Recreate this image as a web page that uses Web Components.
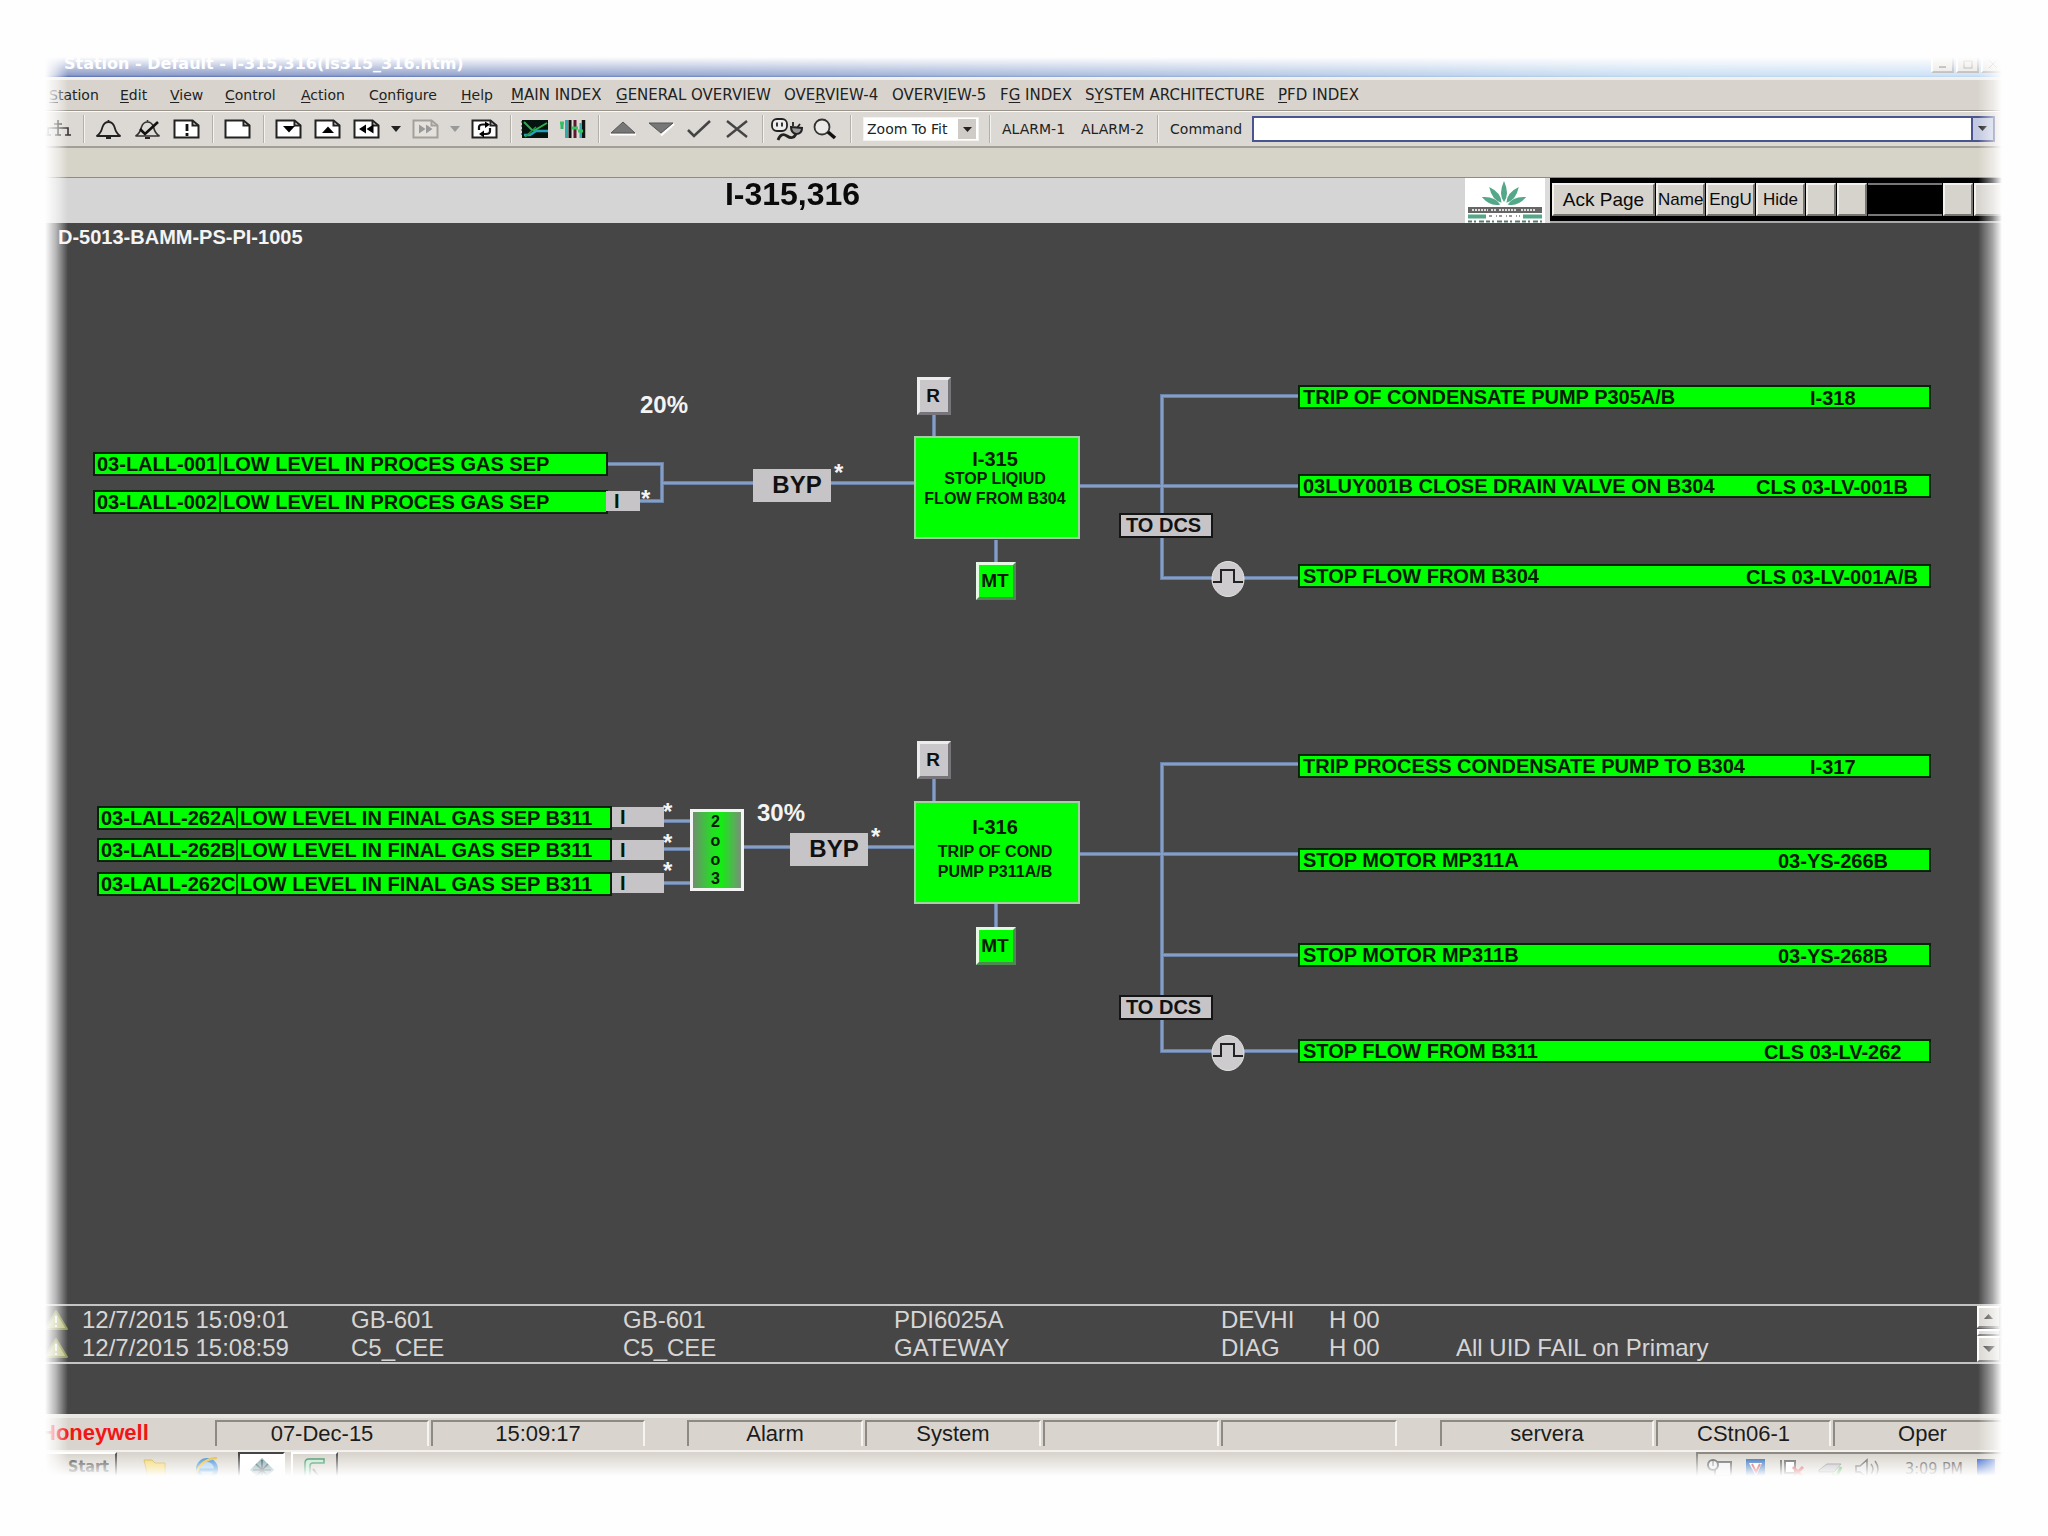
<!DOCTYPE html>
<html lang="en">
<head>
<meta charset="utf-8">
<title>Station - Default - I-315,316</title>
<style>
  html, body { margin: 0; background: #fefefe; }
  body { font-family: "Liberation Sans", Arial, sans-serif; color: #111; }
</style>
</head>
<body>
<station-window>
  <title-bar>Station - Default - I-315,316(Is315_316.htm)</title-bar>
  <menu-bar></menu-bar>
  <tool-bar></tool-bar>
  <page-header>I-315,316</page-header>
  <logic-canvas>
    <free-label x="58" y="0" size="20">D-5013-BAMM-PS-PI-1005</free-label>

    <free-label x="640" y="168" size="24">20%</free-label>
    <trip-input x="93" y="229" w="515" code-width="126" code="03-LALL-001">LOW LEVEL IN PROCES GAS SEP</trip-input>
    <trip-input x="93" y="267" w="515" code-width="126" code="03-LALL-002">LOW LEVEL IN PROCES GAS SEP</trip-input>
    <inhibit-tag x="606" y="268" w="34">I</inhibit-tag>
    <free-label x="641" y="264" size="24" star>*</free-label>
    <bypass-key x="753" y="246">BYP</bypass-key>
    <free-label x="834" y="238" size="24" star>*</free-label>
    <square-key x="917" y="154" w="34">R</square-key>
    <trip-block x="914" y="213" name="I-315"><span>STOP LIQIUD</span><span>FLOW FROM B304</span></trip-block>
    <square-key x="976" y="339" w="40" lit>MT</square-key>
    <dcs-tag x="1119" y="290">TO DCS</dcs-tag>
    <pulse-node x="1211" y="338"></pulse-node>
    <trip-output x="1298" y="162" ref="I-318" indent="510">TRIP OF CONDENSATE PUMP P305A/B</trip-output>
    <trip-output x="1298" y="251" ref="CLS 03-LV-001B" indent="456">03LUY001B CLOSE DRAIN VALVE ON B304</trip-output>
    <trip-output x="1298" y="341" ref="CLS 03-LV-001A/B" indent="446">STOP FLOW FROM B304</trip-output>

    <trip-input x="97" y="583" w="515" code-width="139" code="03-LALL-262A">LOW LEVEL IN FINAL GAS SEP B311</trip-input>
    <trip-input x="97" y="615" w="515" code-width="139" code="03-LALL-262B">LOW LEVEL IN FINAL GAS SEP B311</trip-input>
    <trip-input x="97" y="649" w="515" code-width="139" code="03-LALL-262C">LOW LEVEL IN FINAL GAS SEP B311</trip-input>
    <inhibit-tag x="612" y="584" w="52">I</inhibit-tag>
    <inhibit-tag x="612" y="617" w="52">I</inhibit-tag>
    <inhibit-tag x="612" y="650" w="52">I</inhibit-tag>
    <free-label x="663" y="577" size="24" star>*</free-label>
    <free-label x="663" y="608" size="24" star>*</free-label>
    <free-label x="663" y="636" size="24" star>*</free-label>
    <vote-block x="690" y="586"><span>2</span><span>o</span><span>o</span><span>3</span></vote-block>
    <free-label x="757" y="576" size="24">30%</free-label>
    <bypass-key x="790" y="610">BYP</bypass-key>
    <free-label x="871" y="602" size="24" star>*</free-label>
    <square-key x="917" y="518" w="34">R</square-key>
    <trip-block x="914" y="578" name="I-316" spaced><span>TRIP OF COND</span><span>PUMP P311A/B</span></trip-block>
    <square-key x="976" y="704" w="40" lit>MT</square-key>
    <dcs-tag x="1119" y="772">TO DCS</dcs-tag>
    <pulse-node x="1211" y="812"></pulse-node>
    <trip-output x="1298" y="531" ref="I-317" indent="510">TRIP PROCESS CONDENSATE PUMP TO B304</trip-output>
    <trip-output x="1298" y="625" ref="03-YS-266B" indent="478">STOP MOTOR MP311A</trip-output>
    <trip-output x="1298" y="720" ref="03-YS-268B" indent="478">STOP MOTOR MP311B</trip-output>
    <trip-output x="1298" y="816" ref="CLS 03-LV-262" indent="464">STOP FLOW FROM B311</trip-output>
  </logic-canvas>
  <alarm-banner></alarm-banner>
  <status-bar></status-bar>
  <task-bar></task-bar>
</station-window>

<script>
const RESET = `
  :host, *, *::before, *::after { box-sizing: border-box; }
  button, input, select { font: inherit; color: inherit; margin: 0; padding: 0; border: 0; background: none; border-radius: 0; }
  svg { display: block; }
`;

function define(name, css, html) {
  customElements.define(name, class extends HTMLElement {
    connectedCallback() {
      if (this.shadowRoot) return;
      const root = this.attachShadow({ mode: 'open' });
      root.innerHTML = `<style>${RESET}${css}</style>${html}`;
    }
  });
}

/* Nodes of the free canvas: x, y and w come from attributes. */
function defineNode(name, css, html) {
  customElements.define(name, class extends HTMLElement {
    connectedCallback() {
      if (this.shadowRoot) return;
      const root = this.attachShadow({ mode: 'open' });
      const at = k => this.getAttribute(k);
      const place = `:host { position: absolute; left: ${at('x')}px; top: ${at('y')}px; ${at('w') ? `width: ${at('w')}px;` : ''} font-weight: bold; font-size: 20px; line-height: 20px; white-space: nowrap; color: #031a03; }`;
      root.innerHTML = `<style>${RESET}${place}${css}</style>${typeof html === 'function' ? html(at) : html}`;
    }
  });
}

define('station-window', `
  :host {
    display: flex; flex-direction: column; padding-top: 50px;
    -webkit-mask-image: linear-gradient(to right, transparent 45px, rgba(0,0,0,.4) 56px, #000 68px, #000 calc(100% - 70px), rgba(0,0,0,.5) calc(100% - 56px), transparent calc(100% - 46px)),
      linear-gradient(to bottom, transparent 57px, rgba(0,0,0,.5) 75px, #000 79px, #000 calc(100% - 30px), transparent calc(100% - 8px));
    mask-image: linear-gradient(to right, transparent 45px, rgba(0,0,0,.4) 56px, #000 68px, #000 calc(100% - 70px), rgba(0,0,0,.5) calc(100% - 56px), transparent calc(100% - 46px)),
      linear-gradient(to bottom, transparent 57px, rgba(0,0,0,.5) 75px, #000 79px, #000 calc(100% - 30px), transparent calc(100% - 8px));
    -webkit-mask-composite: source-in; mask-composite: intersect;
  }`, `<slot></slot>`);

define('title-bar', `
  :host { display: flex; justify-content: space-between; align-items: center; height: 27px; padding: 0 0 0 64px;
    background: linear-gradient(to right, #1c3a94, #3d5ca8 35%, #9dc4ea 80%, #a6caf0); color: #fff;
    font: bold 16px/20px "DejaVu Sans", sans-serif; }
  div { display: flex; gap: 2px; padding-right: 44px; }
  button { width: 23px; height: 18px; background: #d8d4cc; border: 2px solid; border-color: #fff #777 #777 #fff; display: grid; place-items: center; }`,
  `<span><slot></slot></span>
   <div>
    <button aria-label="Minimize"><svg width="12" height="10"><path d="M2 8h7" stroke="#333" stroke-width="2"/></svg></button>
    <button aria-label="Restore"><svg width="12" height="10"><rect x="2" y="2" width="8" height="7" fill="none" stroke="#333"/></svg></button>
    <button aria-label="Close"><svg width="12" height="10"><path d="M2 1l8 8M10 1l-8 8" stroke="#333"/></svg></button>
   </div>`);

const MENUS = ['_Station','_Edit','_View','_Control','_Action','C_onfigure','_Help'];
const PAGES = ['_MAIN INDEX','_GENERAL OVERVIEW','OVE_RVIEW-4','OVERV_IEW-5','F_G INDEX','S_YSTEM ARCHITECTURE','_PFD INDEX'];
const menuItem = cls => m => `<button class="${cls}">${m.replace(/_(.)/, '<u>$1</u>')}</button>`;
define('menu-bar', `
  :host { display: block; background: #d8d4cd; border-top: 3px solid #f1efec; border-bottom: 1px solid #99958d;
    font: 14px/20px "DejaVu Sans", sans-serif; color: #222; }
  nav { display: grid; grid-template-columns: 71px 50px 55px 76px 68px 92px 50px 105px 168px 108px 108px 85px 193px auto; justify-content: start; align-items: center; height: 30px; padding-left: 49px; }
  button { text-align: left; white-space: nowrap; }
  .page { font-size: 15px; }
  u { text-underline-offset: 2px; }`,
  `<nav>${MENUS.map(menuItem('menu')).join('')}${PAGES.map(menuItem('page')).join('')}</nav>`);

const page = (inner, c = '#222', f = '#fff') => `<path d="M1.5 1.5h18l6 5v12h-24z" fill="${f}" stroke="${c}" stroke-width="2"/><path d="M19.5 1.5v5h6" fill="none" stroke="${c}" stroke-width="2"/>${inner}`;
const ICONS = {
  'Tree': `<g fill="none" stroke="#333" stroke-width="1.6"><path d="M14 1v8M4 16V9h20v7M14 9v7M10 5h8"/><path d="M1 16h6M11 16h6M21 16h6"/></g>`,
  'Alarms': `<path d="M13.500 1v2M1.500 17c4-2 5-5 6-9 1-3 3-5 6-5s5 2 6 5c1 4 2 7 6 9z" fill="#dedbd6" stroke="#222" stroke-width="1.800"/><path d="M11 19h5" stroke="#222" stroke-width="2"/>`,
  'Acknowledge': `<path d="M13.500 1v2M1.500 17c4-2 5-5 6-9 1-3 3-5 6-5s5 2 6 5c1 4 2 7 6 9z" fill="#dedbd6" stroke="#333" stroke-width="1.600"/><path d="M6 10l5 5L24 3" fill="none" stroke="#111" stroke-width="2.600"/><path d="M11 19h5" stroke="#222" stroke-width="2"/>`,
  'Messages': page('<path d="M14 5v7M14 14v3" stroke="#111" stroke-width="2.800"/>'),
  'Page': page(''),
  'Page down': page('<path d="M8 7h12l-6 6.500z"/>'),
  'Page up': page('<path d="M8 14h12l-6-6.500z"/>'),
  'Back': page('<path d="M13 5.500v9l-7-4.500zM20.500 5.500v9l-7-4.500z"/>'),
  'Forward': page('<path d="M7 5.500v9l6.500-4.500zM14 5.500v9l6.500-4.500z" fill="#999"/>', '#a3a09b', '#e4e1dd'),
  'Reload': page('<path d="M8 11V8q0-2.500 4-2.500h3M19 9v3q0 3-4 3h-3" fill="none" stroke="#111" stroke-width="2.200"/><path d="M14 2.500l5 3-5 3.500zM13 11.500L8 15l5 3.500z"/>'),
  'Trend': `<rect x="1" y="1" width="26" height="18" fill="#061410"/><path d="M1 3h-1M1 7h-1M1 11h-1M1 15h-1" stroke="#222"/><path d="M3 3l8 8h3L26 4" fill="none" stroke="#2fae4c" stroke-width="2"/><path d="M3 16h6l6-4h12" fill="none" stroke="#26a2b8" stroke-width="2.500"/><path d="M4 18L15 8" stroke="#1f9a32" stroke-width="1.500"/>`,
  'Group': `<path d="M3 4v6" stroke="#2fb86a" stroke-width="3"/><path d="M7.500 1v18" stroke="#2fa9ae" stroke-width="3"/><path d="M11 1v18" stroke="#111" stroke-width="3"/><path d="M16 1v18" stroke="#5e1830" stroke-width="3"/><path d="M21.500 4v15" stroke="#2fa9ae" stroke-width="2"/><path d="M24.500 1v18" stroke="#111" stroke-width="3.500"/><path d="M1 4h4M13 9h6M19 12h5" stroke="#35c45e" stroke-width="3"/>`,
  'Raise': `<path d="M1 15.500h26" stroke="#fff" stroke-width="2"/><path d="M2 14L14 3l12 11z" fill="#777" stroke="#555"/>`,
  'Lower': `<path d="M14 16.500L27 5" stroke="#fff" stroke-width="2"/><path d="M2 4h24L14 14z" fill="#777" stroke="#555"/>`,
  'Accept': `<path d="M3 11l6 6L25 2" fill="none" stroke="#444" stroke-width="2.600"/>`,
  'Cancel': `<path d="M4 2l20 16M24 2L4 18" fill="none" stroke="#444" stroke-width="2.400"/>`,
  'Drop': `<path d="M5 7h10l-5 6z" fill="#222"/>`,
  'Drop forward': `<path d="M5 7h10l-5 6z" fill="#999"/>`,
  'Connect': `<g fill="none" stroke="#222" stroke-width="1.800"><rect x="1" y="0" width="15" height="12" rx="5" fill="#eee"/><path d="M6 3.500v4M11 3.500v4"/><path d="M22 3v4M29 5l-3 4"/><path d="M20 8l11 1q0 6-6 6-5-1-5-7z" fill="#999" stroke-width="2"/><path d="M25 15q-3 6-9 2t-9 4" stroke-width="2.800"/></g>`,
  'Find': `<circle cx="11" cy="8" r="7.500" fill="#eceae7" stroke="#333" stroke-width="1.800"/><path d="M17 13l7 6" stroke="#111" stroke-width="3.600"/>`
};
const tool = n => `<button class="${n.startsWith('Drop') ? 'small' : ''}" aria-label="${n}"><svg width="${n === 'Connect' ? 33 : n.startsWith('Drop') ? 20 : 28}" height="21" overflow="visible">${ICONS[n]}</svg></button>`;
const group = (names, cls = '') => `<div class="group ${cls}">${names.map(tool).join('')}</div>`;
const sep = '<i></i>';
define('tool-bar', `
  :host { display: block; border-bottom: 29px solid #d6d3c8; }
  div.bar { display: flex; align-items: center; height: 37px; padding: 0 53px 0 38px; background: #dcd8d3; border-top: 1px solid #fbfaf9; border-bottom: 2px solid #a29e98;
    font: 14px/20px "DejaVu Sans", sans-serif; color: #222; }
  .group { display: flex; flex: none; }
  button { flex: none; width: 39px; height: 28px; display: grid; place-items: center; }
  .tight button { width: 38px; }
  button.small { width: 20px; }
  button.text { width: auto; padding: 0 7px; }
  button.text + button.text { margin-left: 2px; }
  i { flex: none; width: 2px; height: 28px; margin: 0 4px 0 6px; border-left: 1px solid #b3afa9; border-right: 1px solid #f4f2ef; }
  .zoom { flex: none; display: grid; grid-template-columns: 1fr 20px; width: 116px; height: 24px; margin: 0 4px 0 7px; background: #fff; border: 1px solid #f4f2ef; align-items: center; }
  .zoom select { grid-area: 1 / 1 / 2 / 3; appearance: none; height: 22px; padding-left: 3px; }
  .zoom svg { grid-area: 1 / 2; pointer-events: none; background: #cfccc8; justify-self: start; }
  label { flex: 1; display: flex; align-items: center; gap: 10px; padding-left: 7px; }
  .combo { flex: 1; display: flex; height: 26px; border: 2px solid #4a5590; background: #fff; }
  .combo input { flex: 1; min-width: 0; }
  .combo button { width: 22px; height: 22px; border-left: 2px solid #4a5590; background: #c3c9e0; }`,
  `<div class="bar">${group(['Tree'])}${sep}${group(['Alarms','Acknowledge','Messages'])}${sep}${group(['Page'])}${sep}${group(['Page down','Page up','Back','Drop','Forward','Drop forward','Reload'])}${sep}${group(['Trend','Group'], 'tight')}${sep}${group(['Raise','Lower','Accept','Cancel'], 'tight')}${sep}${group(['Connect','Find'], 'tight')}${sep}
    <span class="zoom"><select aria-label="Zoom"><option>Zoom To Fit</option></select><svg width="18" height="20"><path d="M5 8h9l-4.500 5z" fill="#222"/></svg></span>
    ${sep}<button class="text">ALARM-1</button><button class="text">ALARM-2</button>${sep}
    <label>Command<span class="combo"><input type="text"><button aria-label="Command history"><svg width="10" height="6"><path d="M0 0h9l-4.500 5z" fill="#222"/></svg></button></span></label>
  </div>`);

const leaf = (angle, length) => `<path transform="rotate(${angle} 39 28)" d="M39 24q-6 -8 0 -${length}q6 ${length - 8} 0 ${length}z"/>`;
define('page-header', `
  :host { display: flex; background: #d5d5d5; border-top: 1px solid #8f8c84; height: 46px; color: #0a0a0a; }
  h1 { flex: 1; margin: 0; padding: 0 0 12px 120px; font: bold 32px/32px "Liberation Sans", sans-serif; text-align: center; }
  .logo { width: 85px; background: linear-gradient(to right, #fff 80px, #dcdcdc 80px); }
  .keys { display: flex; gap: 1px; width: 498px; padding: 5px 2px 5px; background: #000; border-bottom: 2px solid #aaa; }
  button { background: #d6d3cd; border: 2px solid; border-color: #f3f1ee #77746f #77746f #f3f1ee; height: 33px; font-size: 17px; line-height: 20px; white-space: nowrap; }
  button.ack { font-size: 19px; width: 103px; }
  .word { width: 49px; }
  .spare { width: 30px; }
  .display { width: 74px; height: 33px; border: solid #777; border-width: 2px 0; }
  .rest { flex: 1; }`,
  `<h1><slot></slot></h1>
   <div class="logo"><svg width="80" height="45" viewBox="0 0 80 45">
     <g fill="#52a888">${leaf(0, 21)}${leaf(-38, 20)}${leaf(38, 20)}${leaf(-68, 20)}${leaf(68, 20)}</g>
     <rect x="3" y="29" width="74" height="6" fill="#666"/>
     <path d="M7 32h16M26 32h5M34 32h18M56 32h15" stroke="#ddd" stroke-width="2" stroke-dasharray="2 1"/>
     <path d="M3 38.500h18M58 38.500h19" stroke="#52a888" stroke-width="4"/>
     <path d="M24 38h31" stroke="#999" stroke-width="2" stroke-dasharray="3 4 1 2"/>
     <path d="M3 43.500h74" stroke="#5d7a6e" stroke-width="2" stroke-dasharray="4 2 2 3 5 2"/>
   </svg></div>
   <div class="keys">
     <button class="ack">Ack Page</button><button class="word">Name</button><button class="word">EngU</button><button class="word">Hide</button>
     <button class="spare" aria-label="Spare 1"></button><button class="spare" aria-label="Spare 2"></button>
     <div class="display"></div>
     <button class="spare" aria-label="Spare 3"></button><button class="rest" aria-label="Spare 4"></button>
   </div>`);

const WIRES = [
  'M608 241H662V278H640', 'M662 260H914', 'M934 192V213', 'M996 317V340', 'M1080 263H1298', 'M1298 173H1162V355H1298',
  'M664 598H690M664 626H690M664 660H690', 'M744 624H914', 'M934 556V578', 'M996 681V704', 'M1080 631H1298', 'M1298 541H1162V828H1298', 'M1162 732H1298'
].join('');
define('logic-canvas', `
  :host { display: block; position: relative; height: 1081px; background: #474647; overflow: hidden; }
  svg { width: 100%; height: 100%; }`,
  `<svg aria-hidden="true"><g fill="none"><path d="${WIRES}" stroke="#6b82a8" stroke-width="4"/><path d="${WIRES}" stroke="#869dc4" stroke-width="2"/></g></svg><slot></slot>`);

defineNode('free-label', `:host { color: #f4f4f4; font-size: var(--s); line-height: 28px; } :host([star]) { line-height: 24px; }`,
  at => `<style>:host { --s: ${at('size')}px; }</style><slot></slot>`);
defineNode('trip-input', `
  :host { display: flex; height: 24px; background: #0f0; border: 2px solid #052405; }
  .code { border-right: 2px solid #064f06; padding-left: 2px; }
  .text { padding-left: 2px; }`,
  at => `<span class="code" style="width:${at('code-width')}px">${at('code')}</span><span class="text"><slot></slot></span>`);
defineNode('trip-output', `
  :host { display: grid; width: 633px; height: 24px; background: #0f0; border: 2px solid #052405; }
  span { grid-area: 1 / 1; padding-left: 3px; }
  .ref { line-height: 22px; padding-left: var(--indent); }`,
  at => `<style>:host { --indent: ${at('indent')}px; }</style><span><slot></slot></span><span class="ref">${at('ref')}</span>`);
defineNode('inhibit-tag', `:host { height: 20px; } button { width: 100%; height: 20px; background: #c6c4c6; text-align: left; padding-left: 8px; }`, `<button><slot></slot></button>`);
defineNode('bypass-key', `button { width: 78px; height: 33px; background: #c6c4c6; padding: 0 0 2px 10px; font-size: 24px; line-height: 28px; color: #111; }`, `<button><slot></slot></button>`);
defineNode('square-key', `
  button { width: 100%; height: 38px; background: #c9c7c9; border: 3px solid; border-color: #ececec #77757a #77757a #ececec; padding-right: 2px; color: #111; font-size: 19px; }
  :host([lit]) button { background: #0f0; border-color: #e6f7e6 #4d8a4d #4d8a4d #e6f7e6; color: #031a03; }`, `<button><slot></slot></button>`);
defineNode('trip-block', `
  :host { display: flex; flex-direction: column; align-items: center; width: 166px; height: 103px; padding: 11px 4px 0 0; background: #0f0; border: 2px solid #a3cfa3; font-size: 16px; }
  strong { font-size: 20px; }
  :host([spaced]) { padding-top: 14px; }
  :host([spaced]) strong { margin-bottom: 5px; }
  `, at => `<strong>${at('name')}</strong><slot></slot>`);
defineNode('dcs-tag', `:host { width: 94px; height: 25px; background: #c6c4c6; border: 2px solid #151515; padding-left: 5px; color: #111; }`, `<slot></slot>`);
defineNode('vote-block', `:host { display: flex; flex-direction: column; align-items: center; width: 54px; height: 82px; border: 3px solid #f4f4f4; padding-right: 3px; font-size: 16px; line-height: 19px;
  background: linear-gradient(to right, #6f8f6f, #22e022 42%, #12ee12 58%, #7a8f7a); }`, `<slot></slot>`);
defineNode('pulse-node', ``, `<svg width="34" height="36"><ellipse cx="17" cy="18" rx="16" ry="17.500" fill="#cdcbcd" stroke="#e4e4e4"/><path d="M2 21h8V9h13v12h9" fill="none" stroke="#222" stroke-width="2"/></svg>`);

const ALARMS = [
  ['12/7/2015 15:09:01','GB-601','GB-601','PDI6025A','DEVHI','H 00',''],
  ['12/7/2015 15:08:59','C5_CEE','C5_CEE','GATEWAY','DIAG','H 00','All UID FAIL on Primary']
];
define('alarm-banner', `
  :host { display: block; background: #474647; padding-bottom: 50px; color: #d6d6d6; }
  .list { display: flex; border: solid #c4c4c4; border-width: 2px 0; }
  table { flex: 1; table-layout: fixed; border-collapse: collapse; font-size: 24px; line-height: 28px; }
  td { padding: 0; height: 28px; white-space: nowrap; }
  td svg { margin-left: 43px; }
  .scroll { width: 71px; display: flex; flex-direction: column; justify-content: space-between; background: #555; }
  .scroll button { width: 24px; height: 22px; background: #dad7d2; border: 2px solid; border-color: #fff #777 #777 #fff; display: grid; place-items: center; }
  .scroll .thumb { height: 7px; }
  .scroll button:last-child { height: 26px; }`,
  `<div class="list"><table>
    <colgroup><col style="width:82px"><col style="width:269px"><col style="width:272px"><col style="width:271px"><col style="width:327px"><col style="width:108px"><col style="width:127px"><col></colgroup>
    <tbody>${ALARMS.map(r => `<tr><td><svg width="26" height="24"><path d="M13 3L24 21H2z" fill="#b9bd7c" stroke="#8b9150" stroke-width="2" stroke-linejoin="round"/><path d="M13 8v7M13 17v2" stroke="#eee" stroke-width="2"/></svg></td>${r.map(c => `<td>${c}</td>`).join('')}</tr>`).join('')}</tbody>
  </table>
  <div class="scroll"><button aria-label="Scroll up"><svg width="10" height="6"><path d="M0 5h9L4.500 0z" fill="#333"/></svg></button><button class="thumb" aria-label="Scroll position"></button><button aria-label="Scroll down"><svg width="12" height="7"><path d="M0 0h12L6 6z" fill="#333"/></svg></button></div></div>`);

define('status-bar', `
  :host { display: grid; gap: 2px; grid-template-columns: 213fr 214fr 214fr 38fr 176fr 176fr 176fr 176fr 39fr 214fr 175fr 215fr;
    background: #d9d5ce; border-top: 4px solid #e9e7e3; border-bottom: 2px solid #f3f1ee; padding: 2px 0 4px; font-size: 22px; line-height: 26px; color: #1c1c1c; }
  span { text-align: center; min-width: 0; height: 26px; }
  .cell { border-left: 2px solid #8d8a84; border-top: 2px solid #8d8a84; border-right: 2px solid #f6f4f1; line-height: 24px; }
  .brand { text-align: left; padding-left: 40px; font-weight: bold; color: #f21616; }
  .last { padding-right: 36px; }`,
  `<span class="brand">Honeywell</span><span class="cell">07-Dec-15</span><span class="cell">15:09:17</span><span></span><span class="cell">Alarm</span><span class="cell">System</span><span class="cell"></span><span class="cell"></span><span></span><span class="cell">servera</span><span class="cell">CStn06-1</span><span class="cell last">Oper</span>`);

define('task-bar', `
  :host { display: flex; justify-content: space-between; height: 32px; background: #d9d5ce; color: #444; }
  .left, .tray { display: flex; align-items: flex-start; }
  .left { padding-left: 30px; }
  .start { width: 87px; height: 30px; text-align: right; padding-right: 6px; margin-right: 12px; border: 2px solid; border-color: #fff #555 #555 #fff; font: bold 16px/22px "DejaVu Sans Condensed", sans-serif; }
  .task { width: 47px; height: 30px; display: grid; place-items: start center; padding-top: 3px; border: 2px solid; border-color: #fff #555 #555 #fff; }
  .quick { width: 52px; height: 30px; display: grid; place-items: start center; padding-top: 5px; }
  .active { background: #fff; border-color: #444 #fff #fff #444; margin: 0 6px 0 5px; }
  .tray { width: 352px; padding: 4px 0 0 8px; gap: 11px; border: solid #8d8a84; border-width: 2px 0 0 2px; font: 16px/22px "DejaVu Sans Condensed", sans-serif; }
  .tray span { padding: 0 3px 0 12px; white-space: nowrap; }`,
  `<div class="left">
    <button class="start">Start</button>
    <button class="quick" aria-label="Folders"><svg width="26" height="22"><path d="M2 3h8l3 3h10v14H6z" fill="#f3d560" stroke="#c9a93a"/></svg></button>
    <button class="quick" aria-label="Browser"><svg width="26" height="24"><circle cx="13" cy="12" r="9" fill="#9cc8ee" stroke="#2f86d6" stroke-width="4"/><path d="M5 13h17" stroke="#2f86d6" stroke-width="3"/><path d="M2 18Q6 2 23 1" fill="none" stroke="#e6bb3c" stroke-width="2.500"/></svg></button>
    <button class="task active" aria-label="Station"><svg width="26" height="26"><path d="M13 1l12 12-12 11L1 13z" fill="#6fa0a2"/><path d="M13 3v20M4 13h18M7 7l12 12M19 7L7 19" stroke="#234" stroke-width="1.500"/></svg></button>
    <button class="task" aria-label="Display builder"><svg width="24" height="26"><path d="M2 22V6q0-4 4-4h15v4H10q-3 0-3 3v13z" fill="#bfe5cd" stroke="#2f8a58" stroke-width="1.500"/><path d="M10 12l8 10" stroke="#555" stroke-width="2"/></svg></button>
   </div>
   <div class="tray">
    <svg width="28" height="24"><rect x="9" y="4" width="16" height="14" fill="#eee" stroke="#555" stroke-width="2"/><circle cx="7" cy="7" r="5" fill="#eee" stroke="#555" stroke-width="2"/><path d="M7 3v5" stroke="#555"/></svg>
    <svg width="22" height="24"><path d="M1 1h19v16l-9 6-10-6z" fill="#2465b8"/><path d="M4 5h13l-6 13z" fill="#fff"/><path d="M7 6l4 8 4-8" fill="none" stroke="#c33" stroke-width="2"/></svg>
    <svg width="28" height="24"><path d="M3 2v20M7 3h10v12H7z" fill="#fff" stroke="#555" stroke-width="2"/><path d="M15 9l10 10M25 9L15 19" stroke="#c33" stroke-width="3"/></svg>
    <svg width="26" height="24"><path d="M2 12l8-6h14l-7 8H2z" fill="#bbb" stroke="#777"/><path d="M15 16l4 4 5-11" fill="none" stroke="#2a2" stroke-width="3"/></svg>
    <svg width="28" height="24"><path d="M2 8h4l7-6v18l-7-6H2z" fill="#ddd" stroke="#555" stroke-width="1.500"/><path d="M17 6q4 5 0 10M21 3q6 8 0 16" fill="none" stroke="#555" stroke-width="1.500"/></svg>
    <span>3:09 PM</span>
    <svg width="20" height="22"><rect x="0" y="1" width="18" height="16" fill="#2456c4"/></svg>
   </div>`);
</script>
</body>
</html>
